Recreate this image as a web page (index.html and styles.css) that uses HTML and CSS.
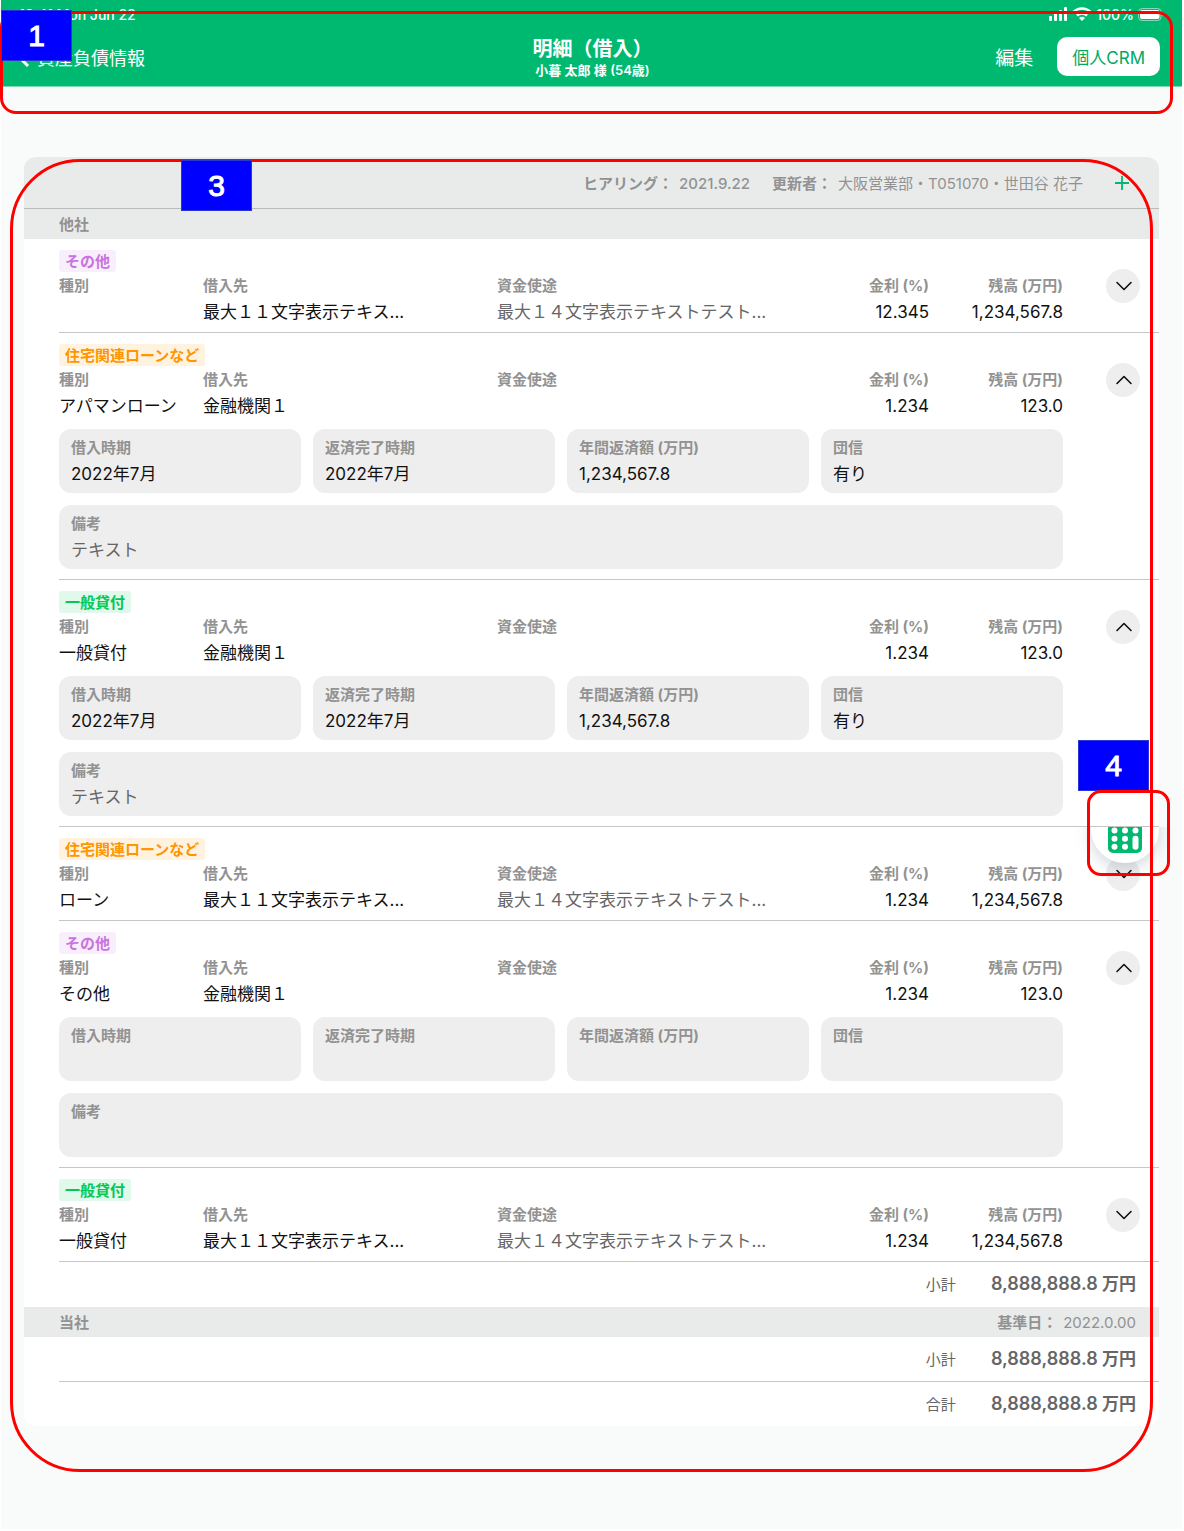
FILE: index.html
```html
<!DOCTYPE html>
<html lang="ja">
<head>
<meta charset="utf-8">
<meta name="viewport" content="width=device-width, initial-scale=1">
<title>明細（借入）</title>
<link rel="stylesheet" href="styles.css">
</head>
<body>
<svg class="defs" aria-hidden="true">
  <symbol id="down" viewBox="0 0 34 34"><path d="M11 13.500l7 7 7-7" fill="none" stroke="#111" stroke-width="1.6" stroke-linecap="round" stroke-linejoin="round"/></symbol>
  <symbol id="up" viewBox="0 0 34 34"><path d="M11 20.500l7-7 7 7" fill="none" stroke="#111" stroke-width="1.6" stroke-linecap="round" stroke-linejoin="round"/></symbol>
</svg>
<div class="page">
  <header class="topbar">
    <div class="status">
      <span class="clock">10:41 Mon Jun 22</span>
      <span class="status-right">
        <svg width="20" height="14" viewBox="0 0 20 14" fill="#fff"><rect x="1" y="9" width="3" height="5" rx="1"/><rect x="6" y="6" width="3" height="8" rx="1"/><rect x="11" y="3" width="3" height="11" rx="1"/><rect x="16" y="0" width="3" height="14" rx="1"/></svg>
        <svg width="20" height="14" viewBox="0 0 20 14" fill="none" stroke="#fff" stroke-width="2.600"><path d="M1.500 5a12 12 0 0 1 17 0"/><path d="M5 8.600a7 7 0 0 1 10 0"/><path d="M10 14l-3-3a4.200 4.200 0 0 1 6 0z" fill="#fff" stroke="none"/></svg>
        <span>100%</span>
        <svg width="26" height="13" viewBox="0 0 26 13"><rect x=".5" y=".5" width="22.500" height="12" rx="3.500" fill="none" stroke="#fff" stroke-opacity=".5"/><rect x="2" y="2" width="19.500" height="9" rx="2" fill="#fff"/><path d="M24.300 4.500v4c1.300-.6 1.300-3.400 0-4z" fill="#fff" fill-opacity=".5"/></svg>
      </span>
    </div>
    <nav class="nav">
      <a class="back" href="#"><svg width="13" height="22" viewBox="0 0 13 22"><path d="M11 2L2 11l9 9" fill="none" stroke="#fff" stroke-width="3"/></svg>資産負債情報</a>
      <div class="heading"><h1>明細（借入）</h1><p>小暮 太郎 様 (54歳)</p></div>
      <div class="actions"><button class="edit" type="button">編集</button><button class="crm" type="button">個人CRM</button></div>
    </nav>
    <div class="frame frame-header"></div>
    <div class="mark mark-header">1</div>
  </header>

  <main>
    <section class="card">
      <div class="card-head">
        <p><b>ヒアリング：</b><span class="date">2021.9.22</span></p>
        <p><b>更新者：</b><span>大阪営業部・T051070・世田谷 花子</span></p>
        <button class="add" type="button" aria-label="追加"><svg width="14" height="14" viewBox="0 0 14 14"><path d="M7 0v14M0 7h14" stroke="#00b971" stroke-width="1.8"/></svg></button>
      </div>
      <h2 class="band">他社</h2>
      <ul class="loans">
        <li class="loan">
          <span class="tag other">その他</span>
          <dl class="summary">
            <div><dt>種別</dt><dd></dd></div>
            <div><dt>借入先</dt><dd>最大１１文字表示テキス...</dd></div>
            <div><dt>資金使途</dt><dd class="soft">最大１４文字表示テキストテスト...</dd></div>
            <div class="num"><dt>金利 (%)</dt><dd>12.345</dd></div>
            <div class="num"><dt>残高 (万円)</dt><dd>1,234,567.8</dd></div>
          </dl>
          <button class="toggle" type="button" aria-label="開く"><svg><use href="#down"/></svg></button>
        </li>
        <li class="loan open">
          <span class="tag housing">住宅関連ローンなど</span>
          <dl class="summary">
            <div><dt>種別</dt><dd>アパマンローン</dd></div>
            <div><dt>借入先</dt><dd>金融機関１</dd></div>
            <div><dt>資金使途</dt><dd></dd></div>
            <div class="num"><dt>金利 (%)</dt><dd>1.234</dd></div>
            <div class="num"><dt>残高 (万円)</dt><dd>123.0</dd></div>
          </dl>
          <button class="toggle" type="button" aria-label="閉じる"><svg><use href="#up"/></svg></button>
          <dl class="details">
            <div><dt>借入時期</dt><dd>2022年7月</dd></div>
            <div><dt>返済完了時期</dt><dd>2022年7月</dd></div>
            <div><dt>年間返済額 (万円)</dt><dd>1,234,567.8</dd></div>
            <div><dt>団信</dt><dd>有り</dd></div>
            <div class="note"><dt>備考</dt><dd class="soft">テキスト</dd></div>
          </dl>
        </li>
        <li class="loan open">
          <span class="tag general">一般貸付</span>
          <dl class="summary">
            <div><dt>種別</dt><dd>一般貸付</dd></div>
            <div><dt>借入先</dt><dd>金融機関１</dd></div>
            <div><dt>資金使途</dt><dd></dd></div>
            <div class="num"><dt>金利 (%)</dt><dd>1.234</dd></div>
            <div class="num"><dt>残高 (万円)</dt><dd>123.0</dd></div>
          </dl>
          <button class="toggle" type="button" aria-label="閉じる"><svg><use href="#up"/></svg></button>
          <dl class="details">
            <div><dt>借入時期</dt><dd>2022年7月</dd></div>
            <div><dt>返済完了時期</dt><dd>2022年7月</dd></div>
            <div><dt>年間返済額 (万円)</dt><dd>1,234,567.8</dd></div>
            <div><dt>団信</dt><dd>有り</dd></div>
            <div class="note"><dt>備考</dt><dd class="soft">テキスト</dd></div>
          </dl>
        </li>
        <li class="loan">
          <span class="tag housing">住宅関連ローンなど</span>
          <dl class="summary">
            <div><dt>種別</dt><dd>ローン</dd></div>
            <div><dt>借入先</dt><dd>最大１１文字表示テキス...</dd></div>
            <div><dt>資金使途</dt><dd class="soft">最大１４文字表示テキストテスト...</dd></div>
            <div class="num"><dt>金利 (%)</dt><dd>1.234</dd></div>
            <div class="num"><dt>残高 (万円)</dt><dd>1,234,567.8</dd></div>
          </dl>
          <button class="toggle" type="button" aria-label="開く"><svg><use href="#down"/></svg></button>
          <div class="calc-clip">
            <button class="calc" type="button" aria-label="電卓"><svg width="34" height="44" viewBox="0 0 34 44"><rect width="34" height="44" rx="5" fill="#00b971"/><g fill="#fff"><rect x="5" y="5" width="24" height="8" rx="2"/><circle cx="6.500" cy="21.500" r="3"/><circle cx="17" cy="21.500" r="3"/><circle cx="27.500" cy="21.500" r="3"/><circle cx="6.500" cy="29.700" r="3"/><circle cx="17" cy="29.700" r="3"/><circle cx="6.500" cy="37.800" r="3"/><circle cx="17" cy="37.800" r="3"/><rect x="24.500" y="26.700" width="6" height="14" rx="3"/></g></svg></button>
          </div>
          <div class="mark mark-calc">4</div>
          <div class="frame frame-calc"></div>
        </li>
        <li class="loan open">
          <span class="tag other">その他</span>
          <dl class="summary">
            <div><dt>種別</dt><dd>その他</dd></div>
            <div><dt>借入先</dt><dd>金融機関１</dd></div>
            <div><dt>資金使途</dt><dd></dd></div>
            <div class="num"><dt>金利 (%)</dt><dd>1.234</dd></div>
            <div class="num"><dt>残高 (万円)</dt><dd>123.0</dd></div>
          </dl>
          <button class="toggle" type="button" aria-label="閉じる"><svg><use href="#up"/></svg></button>
          <dl class="details">
            <div><dt>借入時期</dt><dd></dd></div>
            <div><dt>返済完了時期</dt><dd></dd></div>
            <div><dt>年間返済額 (万円)</dt><dd></dd></div>
            <div><dt>団信</dt><dd></dd></div>
            <div class="note"><dt>備考</dt><dd></dd></div>
          </dl>
        </li>
        <li class="loan">
          <span class="tag general">一般貸付</span>
          <dl class="summary">
            <div><dt>種別</dt><dd>一般貸付</dd></div>
            <div><dt>借入先</dt><dd>最大１１文字表示テキス...</dd></div>
            <div><dt>資金使途</dt><dd class="soft">最大１４文字表示テキストテスト...</dd></div>
            <div class="num"><dt>金利 (%)</dt><dd>1.234</dd></div>
            <div class="num"><dt>残高 (万円)</dt><dd>1,234,567.8</dd></div>
          </dl>
          <button class="toggle" type="button" aria-label="開く"><svg><use href="#down"/></svg></button>
        </li>
      </ul>
      <p class="total"><span>小計</span><strong><span class="amount">8,888,888.8</span> 万円</strong></p>
      <div class="band"><h2>当社</h2><p><b>基準日：</b><span>2022.0.00</span></p></div>
      <p class="total ruled"><span>小計</span><strong><span class="amount">8,888,888.8</span> 万円</strong></p>
      <p class="total"><span>合計</span><strong><span class="amount">8,888,888.8</span> 万円</strong></p>
    </section>
    <div class="frame frame-card"></div>
    <div class="mark mark-card">3</div>
  </main>
</div>
</body>
</html>
```
FILE: styles.css
```css
* { box-sizing: border-box; }
body {
  margin: 0;
  background: #fff;
  color: #111;
  font-family: Inter, "Noto Sans CJK JP", sans-serif;
  font-size: 15px;
}
h1, h2, p, dl, dd, ul { margin: 0; padding: 0; }
button { border: 0; padding: 0; font: inherit; cursor: pointer; }
.defs { position: absolute; width: 0; height: 0; }
.page { margin: 0 2px 2px 1px; background: #f9fbfb; }

/* Top bar */
.topbar {
  position: relative;
  height: 87px;
  border-bottom: 1px solid #7fd8b4;
  background: #00b971;
  color: #fff;
}
.status {
  display: flex;
  justify-content: space-between;
  align-items: center;
  height: 28px;
  padding: 0 18px;
  font-size: 14px;
  font-weight: 500;
}
.status-right { display: flex; align-items: center; gap: 4px; }
.nav {
  display: grid;
  grid-template-columns: 1fr auto 1fr;
  align-items: center;
  height: 57px;
  padding: 0 22px 0 16px;
}
.back {
  display: flex;
  align-items: center;
  gap: 7px;
  color: #fff;
  font-size: 18px;
  text-decoration: none;
}
.heading { margin-left: 8px; text-align: center; }
.heading h1 { font-size: 20px; line-height: 26px; font-weight: 700; }
.heading p { font-size: 13px; line-height: 16px; font-weight: 600; }
.actions { display: flex; justify-content: flex-end; align-items: center; gap: 24px; }
.edit { background: none; color: #fff; font-size: 19px; }
.crm {
  height: 39px;
  padding: 0 15px;
  border-radius: 10px;
  background: #fff;
  color: #00a862;
  font-size: 17px;
}

/* Card */
main { position: relative; padding: 70px 23px 103px; }
.card { border-radius: 12px; background: #fff; }
.card-head {
  display: flex;
  justify-content: flex-end;
  align-items: center;
  height: 52px;
  padding-right: 20px;
  border-bottom: 1px solid #b9bbbb;
  border-radius: 12px 12px 0 0;
  background: #e9ebeb;
  color: #929292;
}
.card-head p {
  display: flex;
  align-items: baseline;
  gap: 6px;
  margin-right: 22px;
  padding-bottom: 1px;
}
.card-head .date { font-weight: 500; }
.add {
  display: grid;
  place-items: center;
  width: 34px;
  height: 34px;
  background: none;
}
.band {
  display: flex;
  justify-content: space-between;
  align-items: center;
  height: 30px;
  padding: 0 23px 2px 35px;
  background: #e9ebeb;
  color: #929292;
  font-size: 15px;
  font-weight: 700;
}
.band h2 { font-size: 15px; }
.band p { display: flex; align-items: baseline; gap: 6px; font-weight: 400; }

/* Loan rows */
.loans { list-style: none; }
.loan {
  position: relative;
  display: grid;
  grid-template-columns: 1fr 34px;
  column-gap: 43px;
  margin-left: 35px;
  padding: 11px 19px 7px 0;
  border-bottom: 1px solid #c4c6c8;
}
.loan.open { padding-bottom: 10px; }
.tag {
  grid-column: 1;
  justify-self: start;
  height: 22px;
  padding: 0 6px;
  border-radius: 3px;
  font-weight: 700;
  line-height: 23px;
}
.other { background: #f9effc; color: #c873e0; }
.housing { background: #fff3e0; color: #ff9500; }
.general { background: #e0f9ea; color: #06c755; }
.summary {
  grid-column: 1;
  display: grid;
  grid-template-columns: 144px 294px 1fr 110px 134px;
}
dt { color: #929292; font-weight: 700; line-height: 27px; }
dd { min-height: 26px; font-size: 17px; line-height: 26px; white-space: nowrap; }
.soft { color: #666; }
.num { text-align: right; }
.toggle {
  grid-column: 2;
  grid-row: 1 / 3;
  align-self: start;
  width: 34px;
  height: 34px;
  margin-top: 19px;
  border-radius: 50%;
  background: #eee;
}
.toggle svg { display: block; width: 34px; height: 34px; }
.details {
  grid-column: 1;
  display: grid;
  grid-template-columns: repeat(4, 1fr);
  gap: 12px;
  margin-top: 10px;
}
.details div {
  padding: 5px 12px 6px;
  border-radius: 12px;
  background: #eee;
}
.details .note { grid-column: 1 / -1; }

/* Floating calculator, cut off by the row above it */
.calc-clip {
  position: absolute;
  top: 0;
  right: -24px;
  width: 116px;
  height: 70px;
  overflow: hidden;
  pointer-events: none;
}
.calc {
  display: flex;
  justify-content: center;
  align-items: flex-end;
  width: 68px;
  height: 68px;
  margin: -32px auto 0;
  padding-bottom: 10px;
  border-radius: 50%;
  background: #fff;
  box-shadow: 0 4px 16px rgba(60, 90, 110, .25);
  pointer-events: auto;
}
.calc svg { display: block; }

/* Totals */
.total {
  display: flex;
  justify-content: flex-end;
  align-items: baseline;
  gap: 35px;
  height: 45px;
  margin-left: 35px;
  padding-right: 23px;
  color: #666;
  line-height: 44px;
}
.total:last-child { height: 44px; }
.total strong { font-size: 17px; font-weight: 600; }
.total .amount { font-size: 18px; }
.ruled { border-bottom: 1px solid #c4c6c8; }

/* Numbered callouts */
.frame { position: absolute; border: 3px solid #f00; pointer-events: none; }
.frame-header { inset: 11px 9px -28px -1px; border-radius: 16px; }
.frame-card { inset: 72px 29px 57px 9px; border-radius: 70px; }
.frame-calc { top: -37px; right: -11px; width: 83px; height: 86px; border-radius: 14px; }
.mark {
  position: absolute;
  width: 71px;
  height: 51px;
  border: 1px solid #2a35d8;
  background: #00f;
  color: #fff;
  font-family: "Liberation Sans", Arial, sans-serif;
  font-size: 30px;
  line-height: 49px;
  text-align: center;
  -webkit-text-stroke: 1px #fff;
}
.mark-header { top: 10px; left: 0; }
.mark-card { top: 73px; left: 180px; }
.mark-calc { top: -87px; right: 10px; }
```
